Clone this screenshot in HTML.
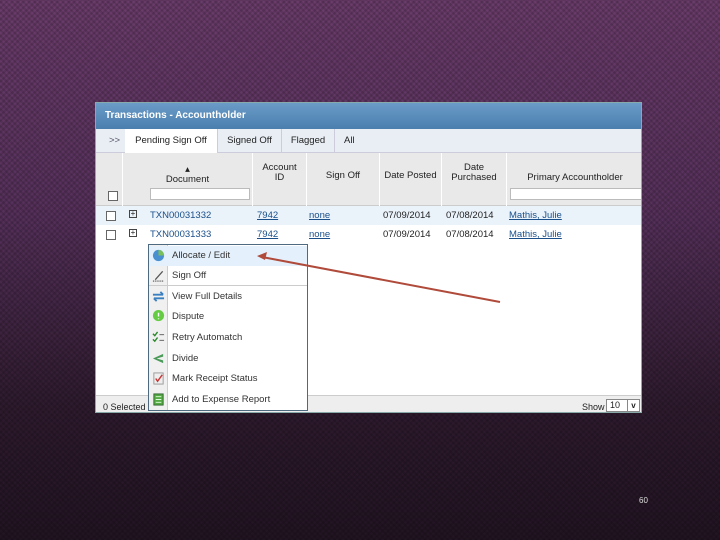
<!DOCTYPE html>
<html><head><style>
*{margin:0;padding:0;box-sizing:border-box}
body{width:720px;height:540px;overflow:hidden;position:relative;font-family:"Liberation Sans",sans-serif;
background:
repeating-linear-gradient(45deg,rgba(0,0,0,.12) 0 2px,transparent 2px 4px),
repeating-linear-gradient(-45deg,rgba(0,0,0,.12) 0 2px,transparent 2px 4px),
linear-gradient(180deg,#6a3c6a 0%,#55305a 40%,#2e1b2e 75%,#221422 100%);}
.p{position:absolute;left:95px;top:102px;width:547px;height:311px;background:#fff;border:1px solid #8aa;overflow:hidden;font-size:9.5px;color:#222}
.tb{height:26px;background:linear-gradient(#6b9bc7,#4a7fae);color:#fff;font-weight:bold;font-size:10px;padding:7px 0 0 9px}
.tabs{height:24px;background:#e8eef4;border-bottom:1px solid #ccd;position:relative}
.tabs span{position:absolute;top:0;height:24px;line-height:23px;font-size:9.5px}
.hd{position:absolute;top:50px;left:0;width:547px;height:53px;background:#e9e9e9;border-bottom:1px solid #ccc}
.hd div{position:absolute;top:0;height:53px;border-left:1px solid #fff;text-align:center;font-size:9.5px;line-height:10px}
.r{position:absolute;left:0;width:547px;height:19px;font-size:9.5px}
.r span{position:absolute;top:4px}
a{color:#1a4f8a;text-decoration:underline}
.cb{position:absolute;width:10px;height:10px;border:1px solid #666;background:#fff}
.m{position:absolute;left:148px;top:244px;width:160px;height:167px;background:#fff;border:1px solid #4d6a80;font-size:9.5px;color:#333}
.m div{position:absolute;left:0;width:158px;height:20px;line-height:20px;padding-left:23px}
.ic{position:absolute;left:3px;top:3px;width:13px;height:13px}
</style></head><body>
<div class="p">
<div class="tb">Transactions - Accountholder</div>
<div class="tabs">
<span style="left:13px;color:#556">&gt;&gt;</span>
<span style="left:29px;width:93px;background:#fff;text-align:center;border-right:1px solid #ccd">Pending Sign Off</span>
<span style="left:122px;width:64px;text-align:center;border-right:1px solid #ccd">Signed Off</span>
<span style="left:186px;width:53px;text-align:center;border-right:1px solid #ccd">Flagged</span>
<span style="left:248px">All</span>
</div>
<div class="hd">
<div style="left:0;width:26px;border:none"><span class="cb" style="left:12px;top:38px"></span></div>
<div style="left:26px;width:130px;padding-top:12px">▴<br>Document<span style="position:absolute;left:27px;top:35px;width:100px;height:12px;background:#fff;border:1px solid #bbb"></span></div>
<div style="left:156px;width:54px;padding-top:10px">Account<br>ID</div>
<div style="left:210px;width:73px;padding-top:18px">Sign Off</div>
<div style="left:283px;width:62px;padding-top:18px">Date Posted</div>
<div style="left:345px;width:65px;padding-top:10px">Date<br>Purchased</div>
<div style="left:410px;width:137px;padding-top:20px">Primary Accountholder<span style="position:absolute;left:3px;top:35px;width:140px;height:12px;background:#fff;border:1px solid #bbb"></span></div>
</div>
<div class="r" style="top:103px;background:#eaf2fa"><span class="cb" style="left:10px;top:5px"></span><span style="left:33px;top:4px;border:1px solid #444;width:8px;height:8px;font-size:8px;line-height:6px;text-align:center">+</span><span style="left:54px;color:#1a4f8a">TXN00031332</span><span style="left:161px"><a>7942</a></span><span style="left:213px"><a>none</a></span><span style="left:287px">07/09/2014</span><span style="left:350px">07/08/2014</span><span style="left:413px"><a>Mathis, Julie</a></span></div>
<div class="r" style="top:122px"><span class="cb" style="left:10px;top:5px"></span><span style="left:33px;top:4px;border:1px solid #444;width:8px;height:8px;font-size:8px;line-height:6px;text-align:center">+</span><span style="left:54px;color:#1a4f8a">TXN00031333</span><span style="left:161px"><a>7942</a></span><span style="left:213px"><a>none</a></span><span style="left:287px">07/09/2014</span><span style="left:350px">07/08/2014</span><span style="left:413px"><a>Mathis, Julie</a></span></div>
<div style="position:absolute;left:0;top:292px;width:547px;height:19px;background:#eee;border-top:1px solid #ccc;font-size:9px"><span style="position:absolute;left:7px;top:6px">0 Selected</span><span style="position:absolute;left:486px;top:6px">Show</span><span style="position:absolute;left:510px;top:3px;width:34px;height:13px;border:1px solid #888;background:#fff;padding-left:3px;line-height:11px">10 <b style="position:absolute;right:0;top:0;width:12px;border-left:1px solid #888;text-align:center;font-size:8px">v</b></span></div>
</div>
<div class="m">
<div style="position:absolute;left:0;top:0;width:19px;height:165px;background:#f0f0f0;border-right:1px solid #ccc;padding:0"></div>
<div style="top:1px;background:#e4f0fb">Allocate / Edit<svg class="ic" viewBox="0 0 14 14"><circle cx="7" cy="7" r="6" fill="#4a8fd0"/><path d="M7 7V1a6 6 0 0 1 6 6z" fill="#7ac05a"/></svg></div>
<div style="top:21px;border-bottom:1px solid #ccc">Sign Off<svg class="ic" viewBox="0 0 14 14"><path d="M3 11L11 2l1 1-8 9z" fill="#555"/><path d="M1 13h12" stroke="#000" stroke-dasharray="1 1"/></svg></div>
<div style="top:42px">View Full Details<svg class="ic" viewBox="0 0 14 14"><path d="M1 5h11M9 2l3 3M13 9H2M5 12L2 9" stroke="#3a7fc0" stroke-width="2" fill="none"/></svg></div>
<div style="top:62px">Dispute<svg class="ic" viewBox="0 0 14 14"><circle cx="7" cy="6" r="6" fill="#6c4"/><path d="M7 3v4M7 9v1" stroke="#fff" stroke-width="1.5"/></svg></div>
<div style="top:83px">Retry Automatch<svg class="ic" viewBox="0 0 14 14"><path d="M1 3l2 2 3-4M1 9l2 2 3-4" stroke="#2a8a2a" stroke-width="1.5" fill="none"/><path d="M8 4h5M8 10h5" stroke="#555"/></svg></div>
<div style="top:104px">Divide<svg class="ic" viewBox="0 0 14 14"><path d="M1 7L12 2v3L5 7l7 2v3z" fill="#4a9a5a"/></svg></div>
<div style="top:124px">Mark Receipt Status<svg class="ic" viewBox="0 0 14 14"><rect x="2" y="1" width="10" height="12" fill="#eee" stroke="#999"/><path d="M4 7l2 3 5-7" stroke="#c33" stroke-width="1.5" fill="none"/></svg></div>
<div style="top:145px">Add to Expense Report<svg class="ic" viewBox="0 0 14 14"><rect x="2" y="1" width="10" height="12" fill="#5a4" stroke="#363"/><path d="M4 4h6M4 7h6M4 10h6" stroke="#dfd"/></svg></div>
</div>
<svg style="position:absolute;left:0;top:0" width="720" height="540"><path d="M500 302L262 257" stroke="#b04a3a" stroke-width="2"/><path d="M257 256l10-4-2 8z" fill="#b04a3a"/></svg>
<div style="position:absolute;left:639px;top:496px;color:#ddd;font-size:8px">60</div>
</body></html>
